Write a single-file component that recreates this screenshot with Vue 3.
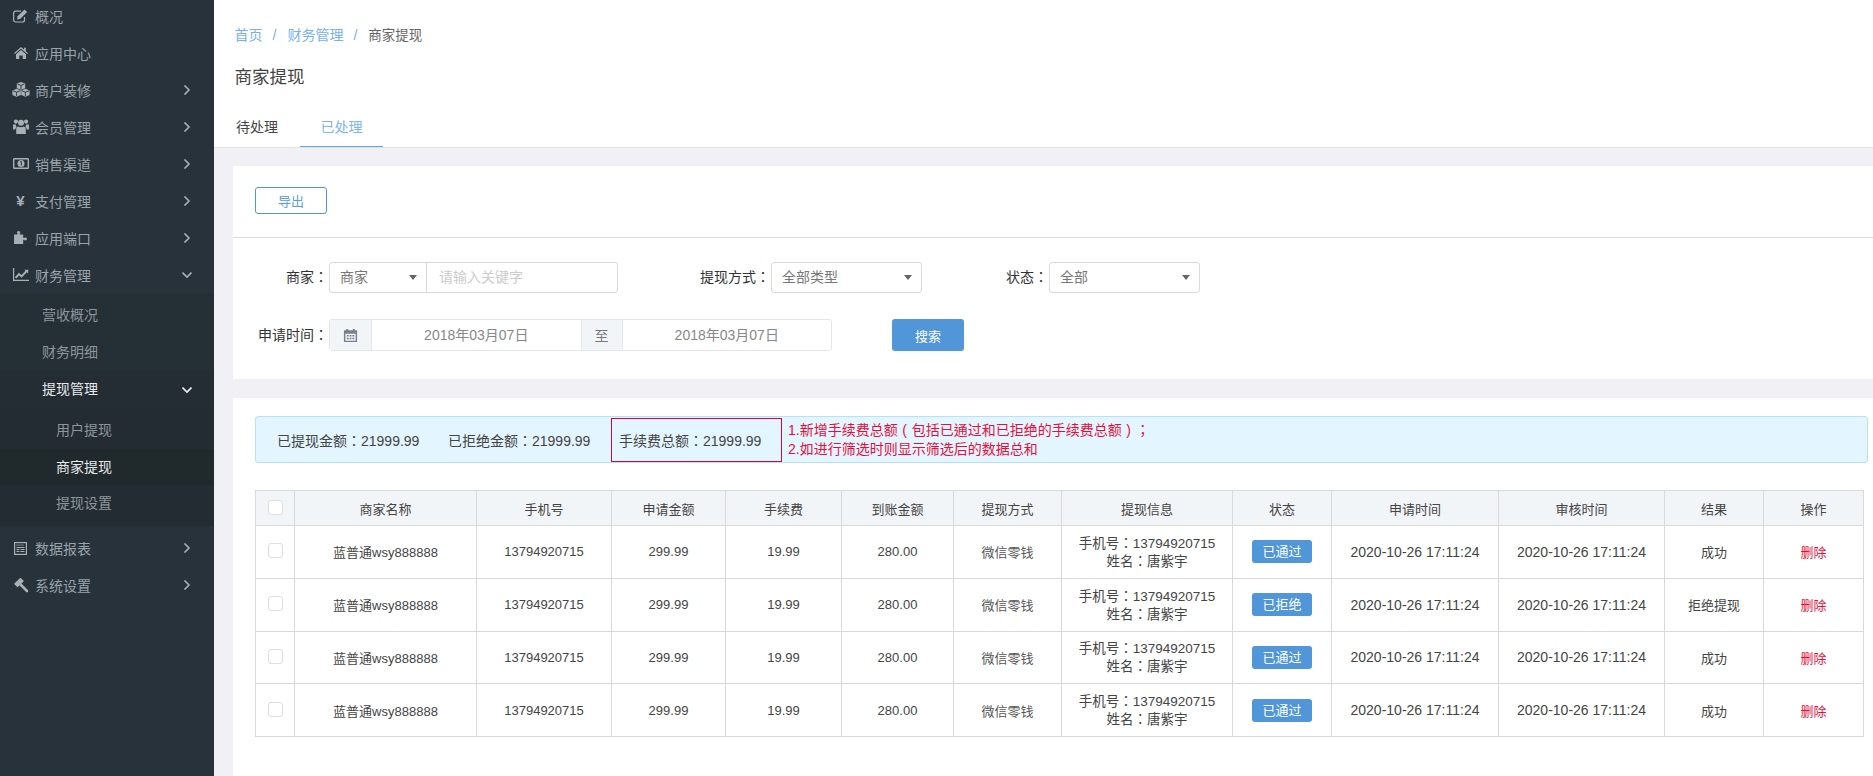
<script setup>
const menu = [
  { label: '概况', icon: 'edit' },
  { label: '应用中心', icon: 'home' },
  { label: '商户装修', icon: 'cubes', arrow: true },
  { label: '会员管理', icon: 'users', arrow: true },
  { label: '销售渠道', icon: 'money', arrow: true },
  { label: '支付管理', icon: 'yen', arrow: true },
  { label: '应用端口', icon: 'puzzle', arrow: true },
  { label: '财务管理', icon: 'chart', arrow: true, open: true }
]
const menuAfter = [
  { label: '数据报表', icon: 'news', arrow: true },
  { label: '系统设置', icon: 'gavel', arrow: true }
]

const columns = ['商家名称', '手机号', '申请金额', '手续费', '到账金额', '提现方式', '提现信息', '状态', '申请时间', '审核时间', '结果', '操作']
const widths = [39, 182, 135, 114, 116, 112, 108, 171, 99, 167, 166, 99, 100]
const rows = [
  { status: '已通过', result: '成功' },
  { status: '已拒绝', result: '拒绝提现' },
  { status: '已通过', result: '成功' },
  { status: '已通过', result: '成功' }
]
</script>

<template>
  <div class="page">
    <aside class="sidebar">
      <div v-for="item in menu" :key="item.label" class="menu-item">
        <span class="menu-icon">
          <svg v-if="item.icon === 'edit'" viewBox="0 0 16 14" width="16" height="14">
            <path d="M11.500 8V11a2 2 0 0 1-2 2H2.600a2 2 0 0 1-2-2V4.200a2 2 0 0 1 2-2H8" fill="none" stroke="currentColor" stroke-width="1.200" />
            <path d="M4.500 7.200 11.500.5l2.600 2.500-7 7-3 .6z" fill="currentColor" />
          </svg>
          <svg v-else-if="item.icon === 'home'" viewBox="0 0 14 12" width="14" height="12">
            <path d="M7 0 0 6.200l.8.900L7 1.700l6.200 5.400.8-.9-2.200-1.900V.8h-1.800v1.800zM2 7.200V12h3.300V8.600h3.400V12H12V7.200L7 2.900z" fill="currentColor" />
          </svg>
          <svg v-else-if="item.icon === 'cubes'" viewBox="0 0 18 15" width="18" height="15">
            <path d="M9 0 13.200 1.600V6.200L9 7.800 4.800 6.200V1.600zM4.600 6.800 8.800 8.400V13L4.600 14.800.4 13V8.400zM13.400 6.800l4.200 1.600V13l-4.200 1.800L9.200 13V8.400z" fill="currentColor" />
            <path d="M5.500 2 9 3.400 12.500 2M1 8.800l3.600 1.400 3.600-1.400M9.800 8.800l3.600 1.400L17 8.800M9 3.400V7M4.600 10.200V14M13.400 10.200V14" fill="none" stroke="#27323a" stroke-width=".9" />
          </svg>
          <svg v-else-if="item.icon === 'users'" viewBox="0 0 16 15" width="16" height="15">
            <circle cx="2.900" cy="2.600" r="2.100" fill="currentColor" />
            <circle cx="13.100" cy="2.600" r="2.100" fill="currentColor" />
            <circle cx="8" cy="3.700" r="3" fill="currentColor" />
            <path d="M0 5.600h3a4.500 4.500 0 0 0 .6 2.400C2.800 8.600 2.400 9.500 2.300 10.500H0zM16 5.600h-3a4.500 4.500 0 0 1-.6 2.400c.8.600 1.200 1.500 1.300 2.500H16zM5 7.600C6.800 8.400 9.200 8.400 11 7.600c1.300.3 1.800 1.600 1.800 3.200V15H3.200v-4.200C3.200 9.200 3.700 7.900 5 7.600z" fill="currentColor" />
          </svg>
          <svg v-else-if="item.icon === 'money'" viewBox="0 0 16 11" width="16" height="11">
            <rect x=".7" y=".7" width="14.600" height="9.600" rx=".5" fill="none" stroke="currentColor" stroke-width="1.400" />
            <circle cx="8" cy="5.500" r="3.500" fill="currentColor" />
            <path d="M7.200 3.800 8.300 3.400V7.700" fill="none" stroke="#27323a" stroke-width="1" />
          </svg>
          <span v-else-if="item.icon === 'yen'" class="yen">¥</span>
          <svg v-else-if="item.icon === 'puzzle'" viewBox="1.500 2.500 11.400 11.500" width="13" height="13">
            <path d="M1.500 5.500H4.200C4.900 5.500 4.600 4.700 4.300 4.300 3.800 3.500 4.400 2.500 5.500 2.500S7.300 3.500 6.800 4.300C6.500 4.700 6.200 5.500 6.900 5.500H9.600V8.200C9.600 8.900 10.400 8.700 10.800 8.400 11.700 7.900 12.900 8.400 12.900 9.500S11.700 11.100 10.800 10.600C10.400 10.300 9.600 10.100 9.600 10.800V14H1.500z" fill="currentColor" />
          </svg>
          <svg v-else-if="item.icon === 'chart'" viewBox="0 0 16 13" width="16" height="13">
            <path d="M.6 0V12.400H16" fill="none" stroke="currentColor" stroke-width="1.200" />
            <path d="M2.600 9.800 6 6l2.600 2.400 5-5.400" fill="none" stroke="currentColor" stroke-width="1.900" />
            <path d="M11.400 1.800h3.800v3.800z" fill="currentColor" />
          </svg>
        </span>
        <span class="menu-text">{{ item.label }}</span>
        <svg v-if="item.arrow" class="chevron" viewBox="0 0 10 10" width="10" height="10">
          <path v-if="item.open" d="M.5 2.500 5 7l4.500-4.500" fill="none" stroke="currentColor" stroke-width="1.600" />
          <path v-else d="M2.500 .5 7 5 2.500 9.500" fill="none" stroke="currentColor" stroke-width="1.600" />
        </svg>
      </div>
      <div class="submenu">
        <div class="sub-item">营收概况</div>
        <div class="sub-item">财务明细</div>
        <div class="withdraw-group">
          <div class="sub-item active">
            提现管理
            <svg class="chevron" viewBox="0 0 10 10" width="10" height="10">
              <path d="M.5 2.500 5 7l4.500-4.500" fill="none" stroke="currentColor" stroke-width="1.600" />
            </svg>
          </div>
          <div class="nested">
            <div class="nested-item">用户提现</div>
            <div class="nested-item current">商家提现</div>
            <div class="nested-item">提现设置</div>
          </div>
        </div>
      </div>
      <div v-for="item in menuAfter" :key="item.label" class="menu-item">
        <span class="menu-icon">
          <svg v-if="item.icon === 'news'" viewBox="0 0 13 13" width="13" height="13">
            <rect x=".6" y=".6" width="11.800" height="11.800" fill="none" stroke="currentColor" stroke-width="1.200" />
            <path d="M2.500 3.200h8" stroke="currentColor" stroke-width="1.200" stroke-dasharray="1 1" />
            <path d="M2.500 5.500h8M6.500 7.500h4M6.500 9.500h4M2.500 7.500h3M2.500 9.500h3" stroke="currentColor" stroke-width="1" />
          </svg>
          <svg v-else viewBox="0 0 16 16" width="16" height="16">
            <rect x="3.500" y="1" width="5" height="9" rx=".5" transform="rotate(45 6 5.500)" fill="currentColor" />
            <path d="M7.500 7.500 14 14" stroke="currentColor" stroke-width="2.600" stroke-linecap="round" />
          </svg>
        </span>
        <span class="menu-text">{{ item.label }}</span>
        <svg class="chevron" viewBox="0 0 10 10" width="10" height="10">
          <path d="M2.500 .5 7 5 2.500 9.500" fill="none" stroke="currentColor" stroke-width="1.600" />
        </svg>
      </div>
    </aside>

    <main class="main">
      <header class="header">
        <div class="breadcrumb">
          <a>首页</a><span class="sep">/</span><a>财务管理</a><span class="sep">/</span><span class="here">商家提现</span>
        </div>
        <h1 class="title">商家提现</h1>
        <div class="tabs">
          <div class="tab">待处理</div>
          <div class="tab active">已处理</div>
        </div>
      </header>

      <section class="card filter-card">
        <div class="toolbar">
          <button class="btn-outline">导出</button>
        </div>
        <div class="filters">
          <div class="filter-row first">
            <label class="label label-shop">商家<i class="colon">：</i></label>
            <div class="input-group shop-group">
              <div class="select-part">商家<span class="caret"></span></div>
              <div class="keyword">请输入关键字</div>
            </div>
            <label class="label label-way">提现方式<i class="colon">：</i></label>
            <div class="select">全部类型<span class="caret"></span></div>
            <label class="label label-state">状态<i class="colon">：</i></label>
            <div class="select">全部<span class="caret"></span></div>
          </div>
          <div class="filter-row">
            <label class="label label-time">申请时间<i class="colon">：</i></label>
            <div class="date-group">
              <div class="addon">
                <svg viewBox="0 0 16 16" width="15" height="15">
                  <path d="M1 2.500h2.500V1h2v1.500h5V1h2v1.500H15V15H1zM2.500 6v7.500h11V6z" fill="#76818d" />
                  <path d="M4 7.500h2v1.600H4zM7 7.500h2v1.600H7zM10 7.500h2v1.600h-2zM4 10.500h2v1.600H4zM7 10.500h2v1.600H7zM10 10.500h2v1.600h-2z" fill="#76818d" />
                </svg>
              </div>
              <div class="date">2018年03月07日</div>
              <div class="addon to">至</div>
              <div class="date">2018年03月07日</div>
            </div>
            <button class="btn-primary">搜索</button>
          </div>
        </div>
      </section>

      <section class="card list-card">
        <div class="summary">
          <span class="sum-item">已提现金额<i class="colon">：</i>21999.99</span>
          <span class="sum-item">已拒绝金额<i class="colon">：</i>21999.99</span>
          <span class="sum-box">手续费总额<i class="colon">：</i>21999.99</span>
          <div class="notes">
            <div>1.新增手续费总额<span class="paren">(</span>包括已通过和已拒绝的手续费总额<span class="paren">)</span>；</div>
            <div>2.如进行筛选时则显示筛选后的数据总和</div>
          </div>
        </div>

        <table class="table">
          <colgroup>
            <col v-for="(w, i) in widths" :key="i" :style="{ width: w + 'px' }" />
          </colgroup>
          <thead>
            <tr>
              <th class="check-cell"><span class="checkbox"></span></th>
              <th v-for="c in columns" :key="c">{{ c }}</th>
            </tr>
          </thead>
          <tbody>
            <tr v-for="(r, i) in rows" :key="i">
              <td class="check-cell"><span class="checkbox"></span></td>
              <td>蓝普通wsy888888</td>
              <td>13794920715</td>
              <td>299.99</td>
              <td>19.99</td>
              <td>280.00</td>
              <td class="muted">微信零钱</td>
              <td class="info">手机号<i class="colon">：</i>13794920715<br />姓名<i class="colon">：</i>唐紫宇</td>
              <td><span class="status">{{ r.status }}</span></td>
              <td class="time">2020-10-26 17:11:24</td>
              <td class="time">2020-10-26 17:11:24</td>
              <td>{{ r.result }}</td>
              <td class="danger">删除</td>
            </tr>
          </tbody>
        </table>
      </section>
    </main>
  </div>
</template>

<style>
html,
body {
  margin: 0;
  background: #f0f0f5;
}
</style>

<style scoped>
.page {
  display: flex;
  width: 1873px;
  height: 776px;
  overflow: hidden;
  font-family: "Liberation Sans", "Noto Sans CJK SC", sans-serif;
  font-size: 14px;
  color: #333;
  background: #f0f0f5;
  text-spacing-trim: space-all;
}

.colon {
  font-style: normal;
  font-family: "Noto Sans CJK TC", sans-serif;
}

/* sidebar */
.sidebar {
  width: 214px;
  flex-shrink: 0;
  background: #27323a;
  color: #9aa3a9;
  margin-top: -3px;
  height: 779px;
}

.menu-item {
  position: relative;
  display: flex;
  align-items: center;
  height: 37px;
}

.menu-icon {
  width: 35px;
  display: flex;
  justify-content: center;
  padding-left: 7px;
  padding-right: 1px;
  box-sizing: border-box;
  color: #a9b0b5;
}

.yen {
  font-weight: 700;
  font-size: 15px;
  line-height: 16px;
}

.chevron {
  position: absolute;
  right: 22px;
  top: 50%;
  margin-top: -5px;
  color: #a9b0b5;
}

.submenu {
  padding-top: 4px;
  margin-bottom: 4px;
  background: #252f36;
  color: #8d969c;
}

.sub-item {
  position: relative;
  height: 37px;
  line-height: 37px;
  padding-left: 42px;
}

.withdraw-group {
  background: #232d33;
}

.sub-item.active {
  color: #e8eaeb;
}

.sub-item.active .chevron {
  color: #f0f0f0;
}

.nested {
  background: #232c32;
  padding: 4px 0;
}

.nested-item {
  height: 36.500px;
  line-height: 36.500px;
  padding-left: 56px;
}

.nested-item.current {
  background: #20292c;
  color: #e8eaeb;
}

/* header */
.main {
  flex: 1;
  min-width: 0;
}

.header {
  height: 147px;
  background: #fff;
  border-bottom: 1px solid #e4e4e8;
  padding-left: 20.500px;
  overflow: hidden;
}

.breadcrumb {
  margin-top: 26px;
  line-height: 18px;
  height: 18px;
  color: #666;
}

.breadcrumb a {
  color: #77b2ec;
}

.here {
  font-size: 13.500px;
}

.sep {
  color: #77b2ec;
  margin: 0 11px 0 10px;
}

.title {
  margin: 21px 0 0;
  font-size: 17.500px;
  font-weight: 400;
  line-height: 24px;
  color: #444;
}

.tabs {
  display: flex;
  margin-top: 19px;
  margin-left: -20.500px;
}

.tab {
  width: 83px;
  height: 40px;
  line-height: 38px;
  box-sizing: border-box;
  text-align: center;
  color: #444;
}

.tab:first-child {
  width: 86px;
}

.tab.active {
  color: #7ab5ec;
  border-bottom: 2px solid #62a7ec;
}

/* cards */
.card {
  margin-left: 19px;
  background: #fff;
}

.filter-card {
  margin-top: 18px;
  height: 213px;
}

.toolbar {
  height: 72px;
  padding: 21px 0 0 22px;
  box-sizing: border-box;
  border-bottom: 1px solid #dcdcdc;
}

.btn-outline {
  width: 72px;
  height: 27px;
  padding: 0;
  background: #fff;
  border: 1px solid #5096d9;
  border-radius: 3px;
  color: #5a9ede;
  font: inherit;
  font-size: 13px;
}

.filter-row {
  display: flex;
  align-items: center;
}

.filter-row.first {
  padding-top: 23px;
  margin-bottom: 26px;
}

.label {
  text-align: right;
  line-height: 31px;
  color: #333;
  box-sizing: border-box;
  padding-right: 1px;
}

.label-shop {
  width: 96px;
}

.label-way {
  width: 153px;
}

.label-state {
  width: 127px;
}

.label-time {
  width: 96px;
}

.input-group {
  display: flex;
  height: 31px;
  border: 1px solid #d9d9d9;
  border-radius: 3px;
  box-sizing: border-box;
}

.shop-group {
  width: 289px;
}

.select-part {
  position: relative;
  width: 97px;
  line-height: 28px;
  padding-left: 10px;
  box-sizing: border-box;
  border-right: 1px solid #d9d9d9;
  color: #777;
}

.keyword {
  padding-left: 12px;
  line-height: 28px;
  color: #ccc;
}

.select {
  position: relative;
  width: 151px;
  height: 31px;
  line-height: 28px;
  padding-left: 10px;
  box-sizing: border-box;
  border: 1px solid #d9d9d9;
  border-radius: 3px;
  color: #777;
}

.caret {
  position: absolute;
  right: 9px;
  top: 12px;
  width: 0;
  height: 0;
  border-left: 4px solid transparent;
  border-right: 4px solid transparent;
  border-top: 5px solid #666;
}

.date-group {
  display: flex;
  width: 503px;
  height: 32px;
  border: 1px solid #e4e7ea;
  border-radius: 3px;
  box-sizing: border-box;
}

.addon {
  width: 41px;
  flex-shrink: 0;
  display: flex;
  align-items: center;
  justify-content: center;
  background: #f2f5f8;
  color: #777;
}

.addon.to {
  border-left: 1px solid #e4e7ea;
  border-right: 1px solid #e4e7ea;
  box-sizing: border-box;
  width: 42px;
}

.addon:first-child {
  border-right: 1px solid #e4e7ea;
}

.date {
  flex: 1;
  text-align: center;
  line-height: 30px;
  color: #888;
}

.btn-primary {
  width: 72px;
  height: 32px;
  margin-left: 60px;
  padding: 0;
  border: none;
  border-radius: 3px;
  background: #5096d9;
  color: #fff;
  font: inherit;
  font-size: 13px;
}

.list-card {
  margin-top: 19px;
  height: 378px;
  padding: 18px 5px 0 22px;
  box-sizing: border-box;
}

/* summary */
.summary {
  display: flex;
  align-items: center;
  height: 47px;
  box-sizing: border-box;
  background: #e3f5fe;
  border: 1px solid #b8e2fb;
  border-radius: 3px;
  padding-left: 21px;
  color: #444;
}

.sum-item {
  width: 171px;
}

.sum-box {
  width: 170.500px;
  height: 44px;
  line-height: 42px;
  box-sizing: border-box;
  border: 1px solid #d9042f;
  padding-left: 7px;
  margin-left: -8px;
}

.notes {
  margin-left: 6.500px;
  color: #e60f3c;
  line-height: 19px;
  font-family: "Liberation Sans", "Noto Sans CJK TC", sans-serif;
}

.paren {
  display: inline-block;
  width: 14px;
  text-align: center;
}

/* table */
.table {
  width: 1608px;
  margin-top: 27px;
  table-layout: fixed;
  border-collapse: collapse;
  font-size: 13px;
  color: #444;
}

.table th,
.table td {
  border: 1px solid #d9d9d9;
  padding: 0;
  text-align: center;
  font-weight: 400;
}

.table th {
  height: 34px;
  background: #f2f5f8;
}

.table td {
  height: 51.800px;
}

.check-cell {
  vertical-align: middle;
}

.checkbox {
  display: block;
  width: 15px;
  height: 15px;
  margin: -2px auto 0 12px;
  background: #fff;
  border: 1px solid #ddd;
  border-radius: 3px;
  box-sizing: border-box;
}

.muted {
  color: #555;
}

.info {
  font-size: 13.500px;
  line-height: 17px;
}

.time {
  font-size: 14px;
}

.status {
  display: block;
  width: 60px;
  height: 23px;
  margin: 0 auto;
  line-height: 23px;
  border-radius: 3px;
  background: #5096d9;
  color: #fff;
}

.danger {
  color: #e60f3c;
}
</style>
